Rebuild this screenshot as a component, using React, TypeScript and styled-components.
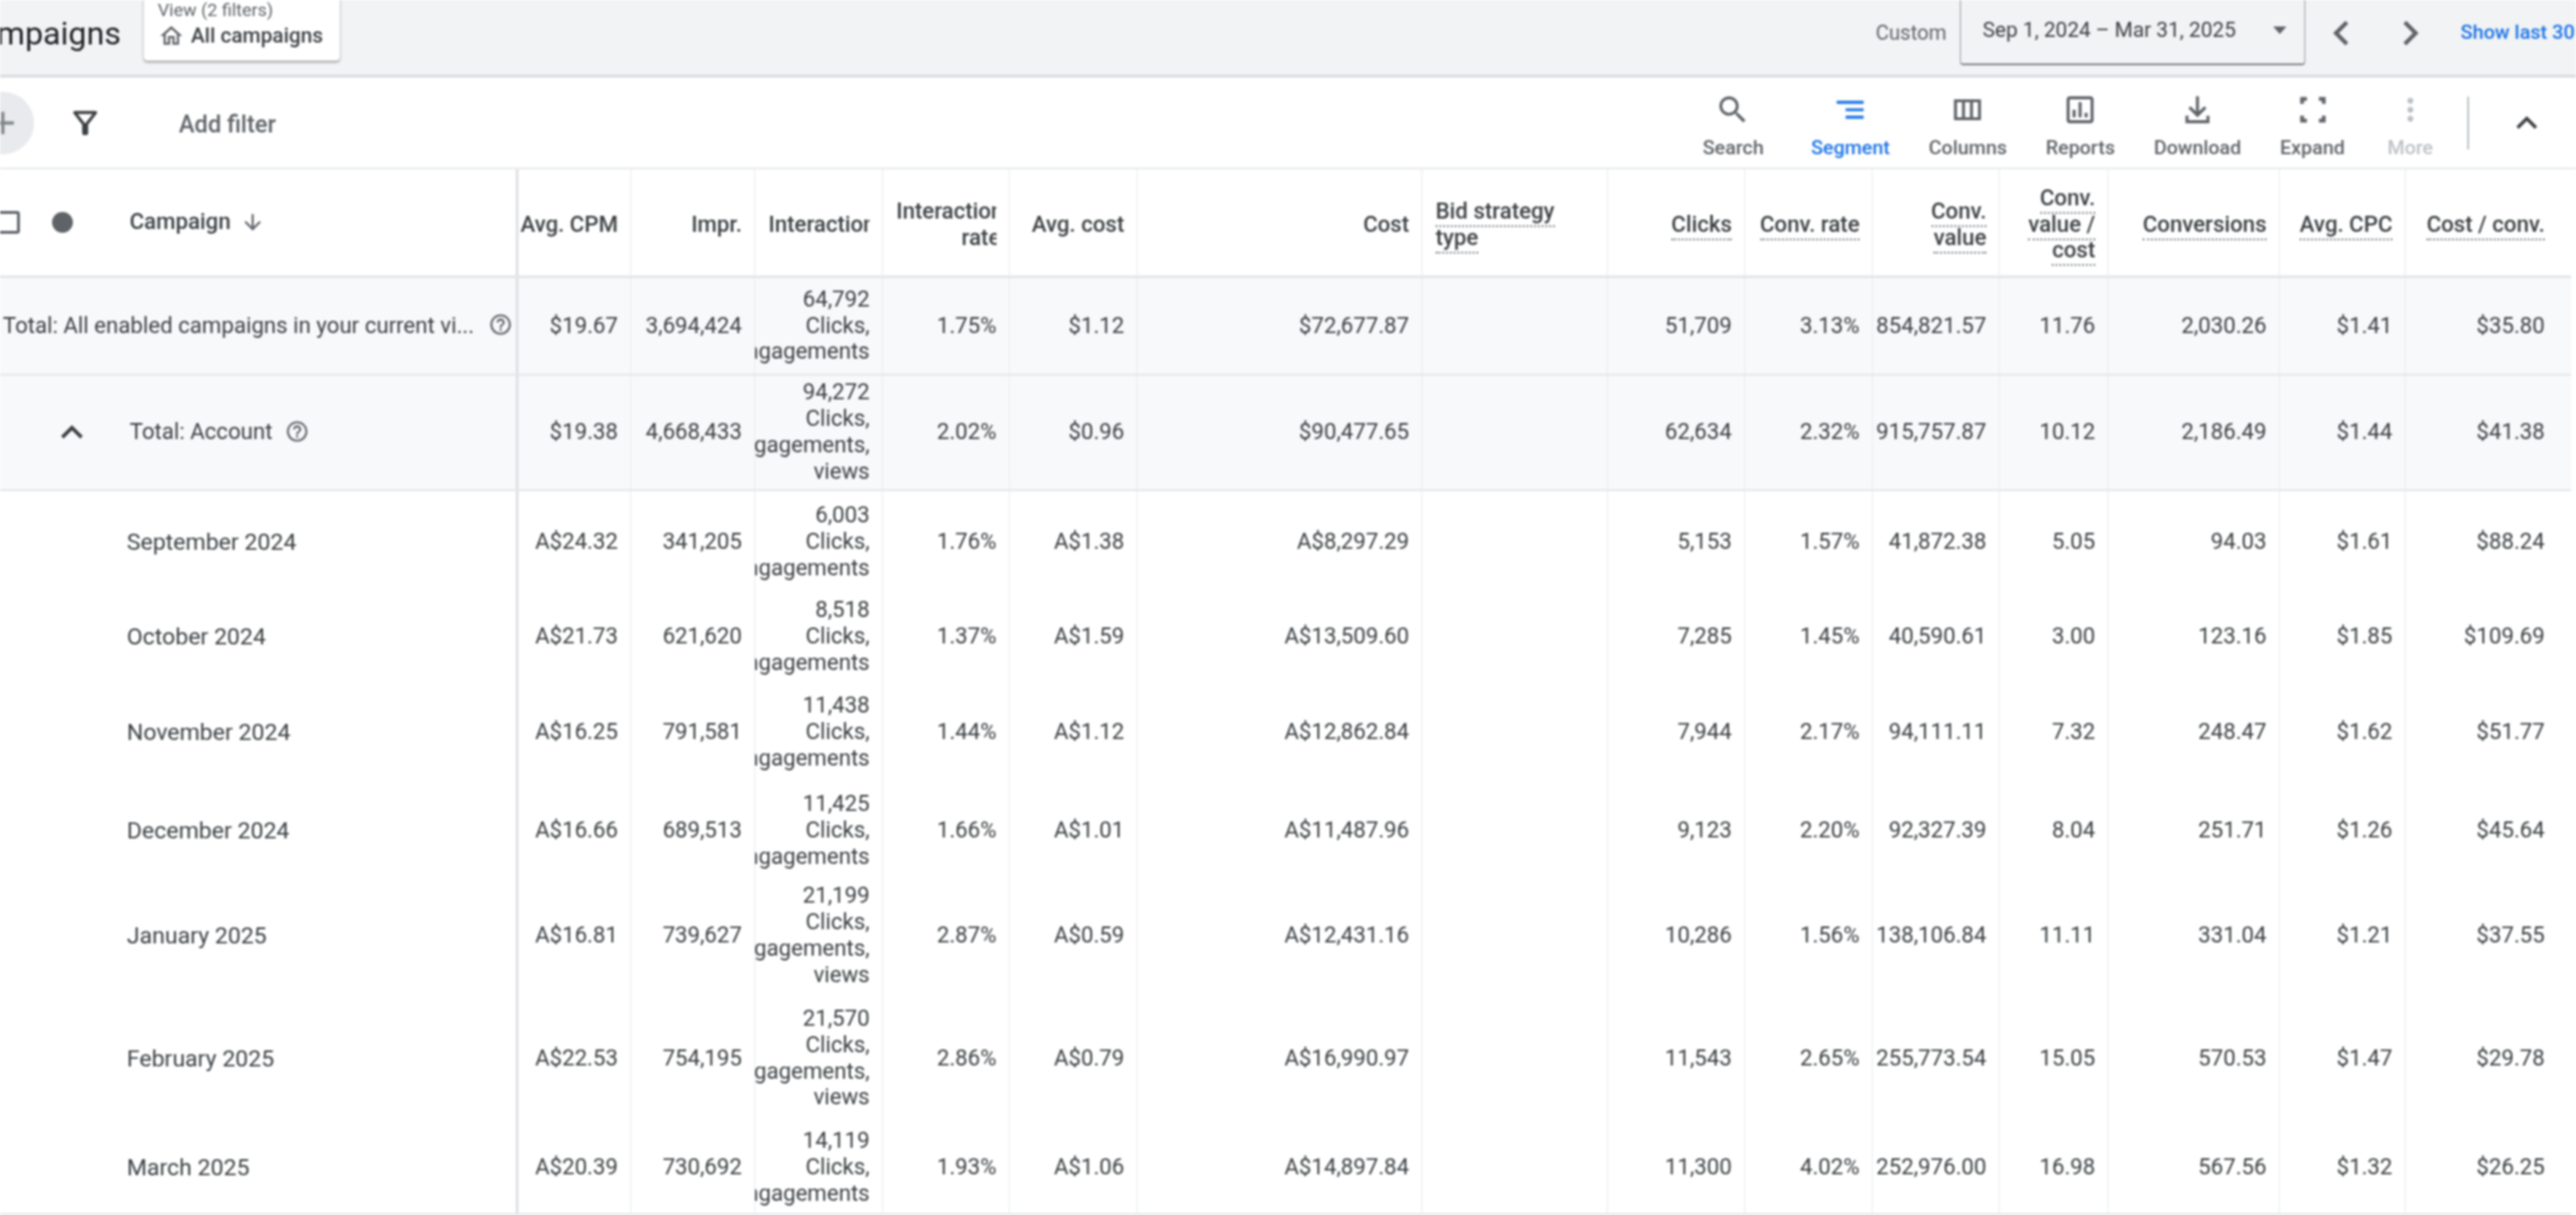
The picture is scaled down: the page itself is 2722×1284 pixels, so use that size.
import React from 'react';
import styled, { createGlobalStyle } from 'styled-components';

const Global = createGlobalStyle`
  html, body { margin: 0; padding: 0; background: #fff; }
  body { font-family: Roboto, "Liberation Sans", sans-serif; overflow: hidden; }
`;

const COLS = '548px 119px 131px 135px 134px 135px 301px 196px 145px 135px 134px 115px 181px 133px 175px';
const TEXT = '#3c4043';

const Page = styled.div`
  width: 2722px;
  height: 1284px;
  overflow: hidden;
  background: #fff;
  color: ${TEXT};
  font-size: 23.5px;
  line-height: 27.8px;
  filter: blur(0.9px);
`;

const TopBar = styled.header`
  height: 79px;
  background: #f1f3f4;
  border-bottom: 3px solid #dadce0;
  display: flex;
  align-items: flex-start;
`;
const Title = styled.div`
  font-size: 34px;
  line-height: 36px;
  margin: 17px 0 0 -44px;
  color: #202124;
`;
const ViewChip = styled.div`
  margin: -4px 0 0 24px;
  width: 207px;
  height: 68px;
  box-sizing: border-box;
  padding: 0 0 0 15px;
  background: #fff;
  border-radius: 4px;
  box-shadow: 0 2px 3px rgba(60, 64, 67, 0.4), 0 0 2px rgba(60, 64, 67, 0.2);
`;
const ChipLabel = styled.div`
  font-size: 19px;
  line-height: 22px;
  margin-top: 4px;
  color: #5f6368;
`;
const ChipValue = styled.div`
  display: flex;
  align-items: center;
  gap: 7px;
  font-size: 22px;
  line-height: 28px;
  margin-top: 2px;
  font-weight: 500;
  svg { width: 28px; height: 28px; fill: #5f6368; }
`;
const DateGroup = styled.div`
  margin-left: auto;
  width: 740px;
  flex: none;
  display: flex;
  align-items: center;
  height: 69px;
  white-space: nowrap;
  overflow: hidden;
`;
const CustomLabel = styled.span`
  font-size: 21.5px;
  color: #5f6368;
  width: 89px;
  flex: none;
`;
const DateBox = styled.div`
  width: 365px;
  flex: none;
  height: 71px;
  margin-top: -3px;
  box-sizing: border-box;
  padding: 0 19px 0 23px;
  display: flex;
  align-items: center;
  justify-content: space-between;
  font-size: 22px;
  border: 1.5px solid #9aa0a6;
  border-top: none;
  border-bottom: 2.5px solid #80868b;
  border-radius: 0 0 4px 4px;
`;
const Caret = styled.span`
  width: 0;
  height: 0;
  border-left: 7px solid transparent;
  border-right: 7px solid transparent;
  border-top: 8px solid #5f6368;
`;
const NavIcon = styled.svg`
  width: 52px;
  height: 52px;
  fill: #5f6368;
  flex: none;
  margin-left: ${p => p.$ml}px;
`;
const ShowLast = styled.span`
  margin-left: 27px;
  font-size: 21px;
  color: #1a73e8;
  font-weight: 500;
`;

const Toolbar = styled.div`
  height: 95px;
  border-bottom: 2px solid #e8eaed;
  display: flex;
  align-items: center;
`;
const PlusButton = styled.div`
  width: 66px;
  height: 66px;
  flex: none;
  margin-left: -30px;
  border-radius: 50%;
  background: #e8eaed;
  display: flex;
  align-items: center;
  justify-content: center;
  svg { width: 40px; height: 40px; fill: #80868b; }
`;
const FilterIcon = styled.svg`
  width: 38px;
  height: 38px;
  margin-left: 35px;
  fill: #3c4043;
  flex: none;
`;
const AddFilter = styled.span`
  margin: 5px 0 0 80px;
  color: #5f6368;
  font-weight: 500;
  font-size: 25px;
`;
const Tools = styled.div`
  margin-left: auto;
  display: flex;
  align-items: flex-start;
  gap: 41px;
  padding-top: 5px;
`;
const Tool = styled.div`
  display: flex;
  flex-direction: column;
  align-items: center;
  font-size: 20.8px;
  line-height: 24px;
  font-weight: 500;
  margin-left: ${p => p.$extra}px;
  color: ${p => (p.$state === 'active' ? '#1a73e8' : p.$state === 'off' ? '#bdc1c6' : '#5f6368')};
  svg { width: 38px; height: 38px; fill: currentColor; margin-bottom: 9px; }
`;
const Divider = styled.div`
  width: 2px;
  height: 56px;
  margin-left: 36px;
  background: #bdc1c6;
`;
const CollapseIcon = styled.svg`
  width: 44px;
  height: 44px;
  margin: 0 30px 0 39px;
  fill: #3c4043;
  flex: none;
`;

const Row = styled.div`
  display: grid;
  grid-template-columns: ${COLS};
  width: 2717px;
  height: ${p => p.$h}px;
  box-sizing: border-box;
  background: ${p => (p.$total ? '#f8f9fa' : '#fff')};
  border-bottom: ${p => (p.$line ? p.$line : 0)}px solid #e4e6e9;
`;
const Cell = styled.div`
  min-width: 0;
  overflow: hidden;
  box-sizing: border-box;
  padding-right: 13px;
  border-right: 1.5px solid #e8eaed;
  display: flex;
  flex-direction: column;
  align-items: flex-end;
  justify-content: center;
  text-align: right;
  white-space: nowrap;
  color: ${TEXT};
  &:last-child { padding-right: 28px; border-right: none; }
`;
const HeadCell = styled(Cell)`
  font-weight: 500;
  color: ${TEXT};
  padding-top: 5px;
  padding-left: ${p => (p.$left ? '14px' : '0')};
  align-items: ${p => (p.$left ? 'flex-start' : 'flex-end')};
  text-align: ${p => (p.$left ? 'left' : 'right')};
`;
const ClipHead = styled.div`
  margin-left: 14px;
  overflow: hidden;
  align-self: stretch;
  text-align: left;
`;
const ClipLines = styled.div`
  display: block;
  width: 110px;
  text-align: right;
`;
const Dotted = styled.span`
  display: block;
  height: 27.8px;
`;
const DottedText = styled.span`
  border-bottom: 2.5px dotted #80868b;
  padding-bottom: 1px;
`;
const Frozen = styled.div`
  min-width: 0;
  overflow: hidden;
  box-sizing: border-box;
  border-right: 3.5px solid #dfe1e5;
  display: flex;
  align-items: center;
  white-space: nowrap;
  padding-left: ${p => p.$pad || 0}px;
  color: ${TEXT};
`;
const MonthName = styled.span`
  font-size: 24.4px;
`;
const CheckBox = styled.span`
  width: 24px;
  height: 24px;
  margin-left: -3px;
  flex: none;
  box-sizing: border-box;
  border: 3px solid #5f6368;
  border-radius: 3px;
`;
const StatusDot = styled.span`
  width: 22px;
  height: 22px;
  margin-left: 34px;
  flex: none;
  border-radius: 50%;
  background: #5f6368;
`;
const CampaignHead = styled.span`
  margin-left: 60px;
  color: ${TEXT};
  font-weight: 500;
`;
const SortIcon = styled.svg`
  width: 26px;
  height: 26px;
  margin-left: 10px;
  fill: #5f6368;
`;
const HelpIcon = styled.svg`
  width: 26px;
  height: 26px;
  flex: none;
  margin: -3px 0 0 ${p => p.$ml}px;
  fill: #5f6368;
`;
const RowChevron = styled.svg`
  width: 46px;
  height: 46px;
  flex: none;
  margin: 0 38px 0 53px;
  fill: #3c4043;
`;

const P: Record<string, string> = {
  search: 'M15.5 14h-.79l-.28-.27A6.47 6.47 0 0 0 16 9.5 6.5 6.5 0 1 0 9.5 16c1.61 0 3.09-.59 4.23-1.57l.27.28v.79l5 4.99L20.49 19l-4.99-5zm-6 0C7.01 14 5 11.99 5 9.5S7.01 5 9.5 5 14 7.01 14 9.5 11.99 14 9.5 14z',
  segment: 'M9 18h12v-2H9v2zM3 6v2h18V6H3zm6 7h12v-2H9v2z',
  columns: 'M3 5v14h18V5H3zm5.33 12H5V7h3.33v10zm5.34 0h-3.34V7h3.34v10zM19 17h-3.33V7H19v10z',
  reports: 'M19 3H5c-1.1 0-2 .9-2 2v14c0 1.1.9 2 2 2h14c1.1 0 2-.9 2-2V5c0-1.1-.9-2-2-2zm0 16H5V5h14v14zM7 12h2v5H7zm4-5h2v10h-2zm4 7h2v3h-2z',
  download: 'M12 3h-1v10.17l-3.59-3.58L6 11l6 6 6-6-1.41-1.41L13 13.17V3zM4 16v5h16v-5h-2v3H6v-3z',
  expand: 'M6 16H3.5v4.5H8V18H6v-2zM3.5 8H6V6h2V3.5H3.5V8zM18 18h-2v2.5h4.5V16H18v2zM16 3.5V6h2v2h2.5V3.5H16z',
  more: 'M12 8c1.1 0 2-.9 2-2s-.9-2-2-2-2 .9-2 2 .9 2 2 2zm0 2c-1.1 0-2 .9-2 2s.9 2 2 2 2-.9 2-2-.9-2-2-2zm0 6c-1.1 0-2 .9-2 2s.9 2 2 2 2-.9 2-2-.9-2-2-2z',
  filter: 'M7 6h10l-5.01 6.3L7 6zm-2.75-.39C6.27 8.2 10 13 10 13v6c0 .55.45 1 1 1h2c.55 0 1-.45 1-1v-6s3.73-4.8 5.75-7.39A.998.998 0 0 0 18.95 4H5.04a1 1 0 0 0-.79 1.61z',
  help: 'M11 18h2v-2h-2v2zm1-16C6.48 2 2 6.48 2 12s4.48 10 10 10 10-4.48 10-10S17.52 2 12 2zm0 18c-4.41 0-8-3.59-8-8s3.59-8 8-8 8 3.59 8 8-3.59 8-8 8zm0-14c-2.21 0-4 1.79-4 4h2c0-1.1.9-2 2-2s2 .9 2 2c0 2-3 1.75-3 5h2c0-2.25 3-2.5 3-5 0-2.21-1.79-4-4-4z',
  home: 'M12 5.69l5 4.5V18h-2v-6H9v6H7v-7.81l5-4.5M12 3L2 12h3v8h6v-6h2v6h6v-8h3L12 3z',
  up: 'M12 8l-6 6 1.41 1.41L12 10.83l4.59 4.58L18 14z',
  left: 'M15.41 7.41L14 6l-6 6 6 6 1.41-1.41L10.83 12z',
  right: 'M8.59 16.59L10 18l6-6-6-6-1.41 1.41L13.17 12z',
  down: 'M20 12l-1.41-1.41L13 16.17V4h-2v12.17l-5.58-5.59L4 12l8 8 8-8z',
  plus: 'M19 13h-6v6h-2v-6H5v-2h6V5h2v6h6v2z',
};

const Glyph = ({ n }: { n: string }) => <svg viewBox="0 0 24 24"><path d={P[n]} /></svg>;

const TOOLS: { label: string; icon: string; state?: string; extra?: number }[] = [
  { label: 'Search', icon: 'search' },
  { label: 'Segment', icon: 'segment', state: 'active', extra: 9 },
  { label: 'Columns', icon: 'columns' },
  { label: 'Reports', icon: 'reports' },
  { label: 'Download', icon: 'download' },
  { label: 'Expand', icon: 'expand' },
  { label: 'More', icon: 'more', state: 'off', extra: 4 },
];

const HEADS: { lines: string[]; dotted?: boolean; left?: boolean; clip?: boolean }[] = [
  { lines: ['Avg. CPM'] },
  { lines: ['Impr.'] },
  { lines: ['Interactions'], clip: true },
  { lines: ['Interactions', 'rate'], clip: true },
  { lines: ['Avg. cost'] },
  { lines: ['Cost'] },
  { lines: ['Bid strategy', 'type'], dotted: true, left: true },
  { lines: ['Clicks'], dotted: true },
  { lines: ['Conv. rate'], dotted: true },
  { lines: ['Conv.', 'value'], dotted: true },
  { lines: ['Conv.', 'value /', 'cost'], dotted: true },
  { lines: ['Conversions'], dotted: true },
  { lines: ['Avg. CPC'], dotted: true },
  { lines: ['Cost / conv.'], dotted: true },
];

const THREE = ['Clicks,', 'engagements'];
const FOUR = ['Clicks,', 'engagements,', 'views'];

const parse = (s: string) => s.split('|');

const MONTHS: { name: string; h: number; line?: number; four?: boolean; v: string }[] = [
  { name: 'September 2024', h: 108, v: 'A$24.32|341,205|6,003|1.76%|A$1.38|A$8,297.29||5,153|1.57%|41,872.38|5.05|94.03|$1.61|$88.24' },
  { name: 'October 2024', h: 92, v: 'A$21.73|621,620|8,518|1.37%|A$1.59|A$13,509.60||7,285|1.45%|40,590.61|3.00|123.16|$1.85|$109.69' },
  { name: 'November 2024', h: 110, v: 'A$16.25|791,581|11,438|1.44%|A$1.12|A$12,862.84||7,944|2.17%|94,111.11|7.32|248.47|$1.62|$51.77' },
  { name: 'December 2024', h: 98, v: 'A$16.66|689,513|11,425|1.66%|A$1.01|A$11,487.96||9,123|2.20%|92,327.39|8.04|251.71|$1.26|$45.64' },
  { name: 'January 2025', h: 124, four: true, v: 'A$16.81|739,627|21,199|2.87%|A$0.59|A$12,431.16||10,286|1.56%|138,106.84|11.11|331.04|$1.21|$37.55' },
  { name: 'February 2025', h: 135, four: true, v: 'A$22.53|754,195|21,570|2.86%|A$0.79|A$16,990.97||11,543|2.65%|255,773.54|15.05|570.53|$1.47|$29.78' },
  { name: 'March 2025', h: 98, line: 2, v: 'A$20.39|730,692|14,119|1.93%|A$1.06|A$14,897.84||11,300|4.02%|252,976.00|16.98|567.56|$1.32|$26.25' },
];

const Values = ({ v, four }: { v: string; four?: boolean }) => (
  <>
    {parse(v).map((x, i) => (
      <Cell key={i}>
        {i === 2 ? [x, ...(four ? FOUR : THREE)].map(l => <span key={l}>{l}</span>) : x}
      </Cell>
    ))}
  </>
);

export default function App() {
  return (
    <Page>
      <Global />
      <TopBar>
        <Title>Campaigns</Title>
        <ViewChip>
          <ChipLabel>View (2 filters)</ChipLabel>
          <ChipValue><Glyph n="home" />All campaigns</ChipValue>
        </ViewChip>
        <DateGroup>
          <CustomLabel>Custom</CustomLabel>
          <DateBox>Sep 1, 2024 – Mar 31, 2025<Caret /></DateBox>
          <NavIcon $ml={12} viewBox="0 0 24 24"><path d={P.left} /></NavIcon>
          <NavIcon $ml={21} viewBox="0 0 24 24"><path d={P.right} /></NavIcon>
          <ShowLast>Show last 30 days</ShowLast>
        </DateGroup>
      </TopBar>

      <Toolbar>
        <PlusButton><Glyph n="plus" /></PlusButton>
        <FilterIcon viewBox="0 0 24 24"><path d={P.filter} /></FilterIcon>
        <AddFilter>Add filter</AddFilter>
        <Tools>
          {TOOLS.map(t => (
            <Tool key={t.label} $state={t.state} $extra={t.extra || 0}><Glyph n={t.icon} />{t.label}</Tool>
          ))}
        </Tools>
        <Divider />
        <CollapseIcon viewBox="0 0 24 24"><path d={P.up} /></CollapseIcon>
      </Toolbar>

      <Row $h={115} $line={3}>
        <Frozen>
          <CheckBox />
          <StatusDot />
          <CampaignHead>Campaign</CampaignHead>
          <SortIcon viewBox="0 0 24 24"><path d={P.down} /></SortIcon>
        </Frozen>
        {HEADS.map(h => (
          <HeadCell key={h.lines.join()} $left={h.left}>
            {h.clip ? (
              <ClipHead>
                <ClipLines>{h.lines.map(l => <Dotted key={l}>{l}</Dotted>)}</ClipLines>
              </ClipHead>
            ) : (
              h.lines.map(l => (
                <Dotted key={l}>{h.dotted ? <DottedText>{l}</DottedText> : l}</Dotted>
              ))
            )}
          </HeadCell>
        ))}
      </Row>

      <Row $h={103} $line={2} $total>
        <Frozen $pad={3}>
          Total: All enabled campaigns in your current vi...
          <HelpIcon $ml={15} viewBox="0 0 24 24"><path d={P.help} /></HelpIcon>
        </Frozen>
        <Values v="$19.67|3,694,424|64,792|1.75%|$1.12|$72,677.87||51,709|3.13%|854,821.57|11.76|2,030.26|$1.41|$35.80" />
      </Row>
      <Row $h={122} $line={2} $total>
        <Frozen>
          <RowChevron viewBox="0 0 24 24"><path d={P.up} /></RowChevron>
          Total: Account
          <HelpIcon $ml={13} viewBox="0 0 24 24"><path d={P.help} /></HelpIcon>
        </Frozen>
        <Values four v="$19.38|4,668,433|94,272|2.02%|$0.96|$90,477.65||62,634|2.32%|915,757.87|10.12|2,186.49|$1.44|$41.38" />
      </Row>

      {MONTHS.map(m => (
        <Row key={m.name} $h={m.h} $line={m.line}>
          <Frozen $pad={134}><MonthName>{m.name}</MonthName></Frozen>
          <Values v={m.v} four={m.four} />
        </Row>
      ))}
    </Page>
  );
}
